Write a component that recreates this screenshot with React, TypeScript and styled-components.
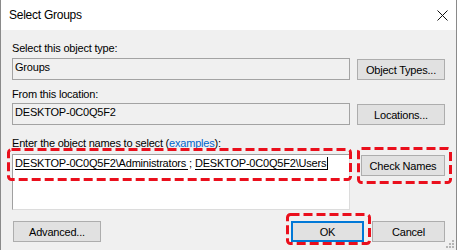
import React from "react";
import styled, { createGlobalStyle } from "styled-components";

const GlobalStyle = createGlobalStyle`
  html, body { margin: 0; padding: 0; background: #ffffff; }
  body { font-family: "Liberation Sans", Arial, sans-serif; }
`;

const Window = styled.div`
  position: relative;
  width: 457px;
  height: 250px;
  box-sizing: border-box;
  border-left: 1px solid #8a8a8a;
  border-right: 1px solid #8a8a8a;
  background: #f0f0f0;
  font-family: "Liberation Sans", Arial, sans-serif;
  font-size: 11px;
  letter-spacing: -0.2px;
  color: #000;
  overflow: hidden;
`;

const TitleBar = styled.div`
  height: 30px;
  background: #ffffff;
  display: flex;
  align-items: center;
  justify-content: space-between;
  padding-left: 8px;
`;

const Title = styled.div`
  font-size: 12px;
  letter-spacing: -0.25px;
  color: #000;
`;

const CloseBox = styled.div`
  width: 27px;
  height: 30px;
  display: flex;
  align-items: center;
  justify-content: center;
`;

const Body = styled.div`
  display: flex;
  flex-direction: column;
  padding: 0 11px 0 11px;
`;

const Label = styled.div<{ $mt: number }>`
  margin-top: ${(p) => p.$mt}px;
  height: 13px;
  line-height: 13px;
  white-space: nowrap;
`;

const Link = styled.span`
  color: #0066cc;
`;

const Row = styled.div<{ $mt: number; $gap: number }>`
  display: flex;
  align-items: flex-start;
  gap: ${(p) => p.$gap}px;
  margin-top: ${(p) => p.$mt}px;
`;

const ReadOnlyBox = styled.div`
  box-sizing: border-box;
  width: 338px;
  height: 22px;
  border: 1px solid #a3a3a3;
  background: #f0f0f0;
  padding: 2px 2px;
  line-height: 13px;
  white-space: nowrap;
`;

const NamesBox = styled.div`
  box-sizing: border-box;
  width: 338px;
  height: 56px;
  border: 1px solid #a0a0a0;
  border-right-color: #dcdcdc;
  border-bottom-color: #dcdcdc;
  background: #ffffff;
  padding: 2px 2px;
  line-height: 13px;
  white-space: nowrap;
`;

const Name = styled.span<{ $caret?: boolean }>`
  display: inline-block;
  line-height: 12px;
  border-bottom: 1px solid #000;
  border-right: ${(p) => (p.$caret ? "1px solid #000" : "none")};
  padding-right: ${(p) => (p.$caret ? "1px" : "2px")};
`;

const Sep = styled.span`
  display: inline-block;
  padding: 0 3px 0 1px;
`;

const Button = styled.div<{ $w: number; $mt?: number; $ml?: number; $primary?: boolean }>`
  box-sizing: border-box;
  width: ${(p) => p.$w}px;
  height: 21px;
  margin-top: ${(p) => p.$mt ?? 0}px;
  margin-left: ${(p) => p.$ml ?? 0}px;
  background: #e1e1e1;
  border: ${(p) => (p.$primary ? "2px solid #0078d7" : "1px solid #adadad")};
  display: flex;
  align-items: center;
  justify-content: center;
  white-space: nowrap;
  flex-shrink: 0;
`;

const BottomRow = styled.div`
  display: flex;
  align-items: flex-start;
  margin-top: 11px;
`;

const Spacer = styled.div`
  flex: 1;
`;

const ButtonGroup = styled.div`
  display: flex;
  gap: 8px;
`;

const Overlay = styled.svg`
  position: absolute;
  left: -1px;
  top: 0;
  pointer-events: none;
`;

const Grip = styled.svg`
  position: absolute;
  right: 1px;
  bottom: 1px;
`;

export default function App() {
  return (
    <>
      <GlobalStyle />
      <Window>
        <TitleBar>
          <Title>Select Groups</Title>
          <CloseBox>
            <svg width="11" height="11" viewBox="0 0 11 11">
              <path d="M0.5 0.5 L10.5 10.5 M10.5 0.5 L0.5 10.5" stroke="#111" strokeWidth="1" fill="none" />
            </svg>
          </CloseBox>
        </TitleBar>
        <Body>
          <Label $mt={12}>Select this object type:</Label>
          <Row $mt={3} $gap={7}>
            <ReadOnlyBox>Groups</ReadOnlyBox>
            <Button $w={88} $mt={1}>Object Types...</Button>
          </Row>
          <Label $mt={8}>From this location:</Label>
          <Row $mt={2} $gap={7}>
            <ReadOnlyBox>DESKTOP-0C0Q5F2</ReadOnlyBox>
            <Button $w={88} $mt={1}>Locations...</Button>
          </Row>
          <Label $mt={12}>
            Enter the object names to select (<Link>examples</Link>):
          </Label>
          <Row $mt={4} $gap={11}>
            <NamesBox>
              <Name>DESKTOP-0C0Q5F2\Administrators</Name>
              <Sep>;</Sep>
              <Name $caret>DESKTOP-0C0Q5F2\Users</Name>
            </NamesBox>
            <Button $w={84} $mt={1}>Check Names</Button>
          </Row>
          <BottomRow>
            <Button $w={88} $ml={1}>Advanced...</Button>
            <Spacer />
            <ButtonGroup>
              <Button $w={73} $primary>OK</Button>
              <Button $w={73}>Cancel</Button>
            </ButtonGroup>
          </BottomRow>
        </Body>
        <Grip width="10" height="10" viewBox="0 0 10 10">
          <g fill="#b5b5b5">
            <rect x="7" y="1" width="2" height="2" />
            <rect x="4" y="4" width="2" height="2" />
            <rect x="7" y="4" width="2" height="2" />
            <rect x="1" y="7" width="2" height="2" />
            <rect x="4" y="7" width="2" height="2" />
            <rect x="7" y="7" width="2" height="2" />
          </g>
        </Grip>
        <Overlay width="459" height="250" viewBox="0 0 459 250">
          <g fill="none" stroke="#ea0f1c" strokeWidth="3" strokeDasharray="9 4">
            <rect x="8.5" y="149.5" width="342" height="30" rx="3" />
            <rect x="358.5" y="148.5" width="92" height="34" rx="3" />
            <rect x="287.5" y="214.5" width="82" height="29" rx="3" />
          </g>
        </Overlay>
      </Window>
    </>
  );
}
